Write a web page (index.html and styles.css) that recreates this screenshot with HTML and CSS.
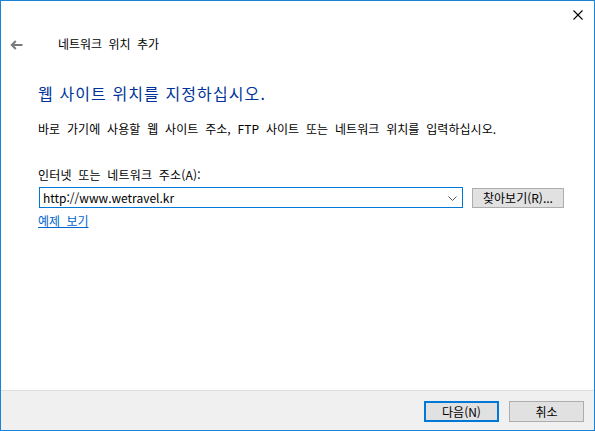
FILE: index.html
```html
<!DOCTYPE html>
<html lang="ko">
<head>
<meta charset="utf-8">
<title>네트워크 위치 추가</title>
<link rel="stylesheet" href="styles.css">
</head>
<body>
<div class="window">
  <div class="titlebar">
    <svg class="close" width="10" height="10" viewBox="0 0 10 10"><path d="M0.5 0.5L9.5 9.5M9.5 0.5L0.5 9.5" stroke="#000" stroke-width="1.1" fill="none"/></svg>
  </div>
  <div class="nav">
    <svg class="back" width="13" height="10" viewBox="0 0 13 10"><path d="M12.5 5H2M5.8 1L1.8 5L5.8 9" stroke="#7a7a7a" stroke-width="2" fill="none"/></svg>
    <span class="nav-title">네트워크 위치 추가</span>
  </div>
  <div class="content">
    <h1 class="heading">웹 사이트 위치를 지정하십시오.</h1>
    <p class="desc">바로 가기에 사용할 웹 사이트 주소, FTP 사이트 또는 네트워크 위치를 입력하십시오.</p>
    <label class="label">인터넷 또는 네트워크 주소(A):</label>
    <div class="field-row">
      <div class="combo">
        <span class="combo-text">http://www.wetravel.kr</span>
        <svg class="chevron" width="9" height="5" viewBox="0 0 9 5"><path d="M0.5 0.5L4.5 4.5L8.5 0.5" stroke="#555" stroke-width="1" fill="none"/></svg>
      </div>
      <button class="btn browse">찾아보기(R)...</button>
    </div>
    <a class="link" href="#">예제 보기</a>
  </div>
  <div class="footer">
    <button class="btn primary">다음(N)</button>
    <button class="btn">취소</button>
  </div>
</div>
</body>
</html>
```
FILE: styles.css
```css
* { box-sizing: border-box; }
html, body { margin: 0; padding: 0; }
body {
  width: 595px;
  height: 431px;
  font-family: "Noto Sans CJK KR", "Noto Sans", sans-serif;
  font-size: 12px;
  color: #000;
  background: #fff;
}
.window {
  width: 595px;
  height: 431px;
  border: 1px solid #1883d7;
  display: flex;
  flex-direction: column;
  background: #fff;
}
.titlebar {
  height: 30px;
  display: flex;
  justify-content: flex-end;
  align-items: flex-start;
  padding: 9px 11px 0 0;
}
.close { display: block; }
.nav {
  height: 26px;
  display: flex;
  align-items: center;
  padding-left: 9px;
}
.back { display: block; margin-top: 1px; }
.nav-title {
  margin-left: 35px;
  font-size: 12px;
  line-height: 16px;
  word-spacing: 3px;
}
.content {
  padding-left: 37px;
  display: flex;
  flex-direction: column;
  align-items: flex-start;
}
.heading {
  margin: 26px 0 0 0;
  font-size: 16px;
  font-weight: normal;
  line-height: 20px;
  letter-spacing: 1.1px;
  color: #003399;
}
.desc {
  margin: 18px 0 0 0;
  line-height: 16px;
  word-spacing: 3.4px;
  letter-spacing: 0.05px;
}
.label {
  margin-top: 30px;
  line-height: 16px;
  word-spacing: 3px;
  letter-spacing: 0.2px;
}
.field-row {
  margin-top: 4px;
  display: flex;
  align-items: flex-start;
  gap: 9px;
  margin-left: 1px;
}
.combo {
  width: 424px;
  height: 21px;
  border: 1px solid #0078d7;
  display: flex;
  align-items: center;
  justify-content: space-between;
  padding: 0 5px 0 3px;
}
.combo-text { line-height: 16px; }
.chevron { display: block; margin-top: 1px; }
.btn {
  font-family: inherit;
  font-size: 12px;
  color: #000;
  background: #e1e1e1;
  border: 1px solid #adadad;
  padding: 0;
  height: 21px;
  width: 75px;
  line-height: 16px;
  border-radius: 0;
}
.browse {
  width: 92px;
  height: 20px;
  margin-top: 1px;
}
.link {
  margin-top: 5px;
  line-height: 16px;
  color: #0066cc;
  text-decoration: underline;
  word-spacing: 3px;
}
.footer {
  margin-top: auto;
  height: 40px;
  border-top: 1px solid #dfdfdf;
  background: #f0f0f0;
  display: flex;
  justify-content: flex-end;
  align-items: flex-start;
  gap: 10px;
  padding: 10px 10px 0 0;
}
.primary {
  border: 2px solid #0078d7;
}
```
